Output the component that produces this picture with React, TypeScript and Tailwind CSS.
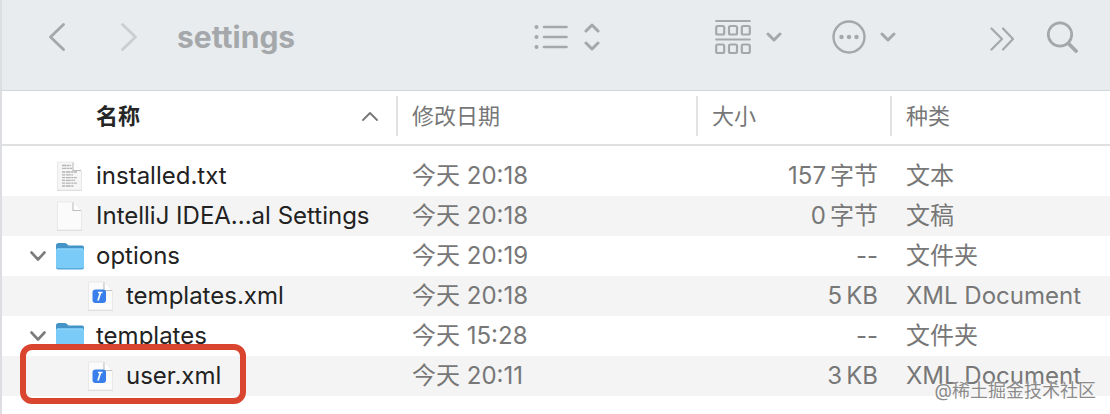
import type { ReactNode } from "react";
import clsx from "clsx";

type Kind = "text" | "blank" | "folder" | "xml";

type Entry = {
  name: string;
  icon: Kind;
  date: string;
  amount: string;
  unit?: string;
  kind: string;
  nested?: boolean;
  marked?: boolean;
};

const entries: Entry[] = [
  { name: "installed.txt", icon: "text", date: "20:18", amount: "157", unit: "字节", kind: "文本" },
  { name: "IntelliJ IDEA...al Settings", icon: "blank", date: "20:18", amount: "0", unit: "字节", kind: "文稿" },
  { name: "options", icon: "folder", date: "20:19", amount: "--", kind: "文件夹" },
  { name: "templates.xml", icon: "xml", date: "20:18", amount: "5", unit: "KB", kind: "XML Document", nested: true },
  { name: "templates", icon: "folder", date: "15:28", amount: "--", kind: "文件夹" },
  { name: "user.xml", icon: "xml", date: "20:11", amount: "3", unit: "KB", kind: "XML Document", nested: true, marked: true },
];

function Stroke({ className, box, d, width = 3 }: { className: string; box: string; d: string; width?: number }) {
  return (
    <svg className={className} viewBox={box} fill="none" stroke="currentColor" strokeWidth={width} strokeLinecap="round" strokeLinejoin="round" aria-hidden="true">
      <path d={d} />
    </svg>
  );
}

function SmallChevron() {
  return <Stroke className="w-4 h-3" box="0 0 16 12" d="M2 3l6 6 6-6" />;
}

function ToolButton({ label, className, children }: { label: string; className?: string; children: ReactNode }) {
  return (
    <button type="button" aria-label={label} className={clsx("flex items-center shrink-0", className)}>
      {children}
    </button>
  );
}

function Toolbar() {
  return (
    <header className="flex items-center h-[91px] pl-[47px] pr-8 pb-4 bg-[#e8ecef] border-b border-[#d3d6d8] text-[#a5a8aa]">
      <ToolButton label="后退">
        <Stroke className="w-4 h-7" box="0 0 16 28" d="M14.5 1.500L1.500 14l13 12.500" width={2.8} />
      </ToolButton>
      <ToolButton label="前进" className="ml-14 text-[#cbced0]">
        <Stroke className="w-4 h-7" box="0 0 16 28" d="M1.500 1.500L14.500 14l-13 12.500" width={2.8} />
      </ToolButton>
      <h1 className="ml-10 text-[30px] leading-8 font-bold">settings</h1>

      <div className="flex items-center ml-auto">
        <ToolButton label="显示方式" className="gap-4">
          <svg className="w-[34px] h-6" viewBox="0 0 34 24" fill="currentColor" aria-hidden="true">
            <circle cx="2.500" cy="2" r="2" />
            <circle cx="2.500" cy="12" r="2" />
            <circle cx="2.500" cy="22" r="2" />
            <path d="M10 2h22.500M10 12h22.500M10 22h22.500" stroke="currentColor" strokeWidth="2.600" strokeLinecap="round" />
          </svg>
          <Stroke className="w-4 h-7" box="0 0 16 28" d="M2 8l6-6 6 6M2 20l6 6 6-6" />
        </ToolButton>
        <ToolButton label="分组" className="ml-[115px] gap-[15px]">
          <svg className="w-9 h-9" viewBox="0 0 36 36" fill="none" stroke="currentColor" strokeWidth="2.200" strokeLinecap="round" aria-hidden="true">
            <path d="M1.200 2h33.600M1.200 20.500h33.600" />
            <rect x="1.200" y="7" width="8" height="8.500" rx="1.500" />
            <rect x="14" y="7" width="8" height="8.500" rx="1.500" />
            <rect x="26.800" y="7" width="8" height="8.500" rx="1.500" />
            <rect x="1.200" y="25.500" width="8" height="8.500" rx="1.500" />
            <rect x="14" y="25.500" width="8" height="8.500" rx="1.500" />
            <rect x="26.800" y="25.500" width="8" height="8.500" rx="1.500" />
          </svg>
          <SmallChevron />
        </ToolButton>
        <ToolButton label="操作" className="ml-[50px] gap-[14px]">
          <svg className="w-[34px] h-[34px]" viewBox="0 0 34 34" aria-hidden="true">
            <circle cx="17" cy="17" r="15.500" fill="none" stroke="currentColor" strokeWidth="2.400" />
            <g fill="currentColor">
              <circle cx="9.500" cy="17" r="2.200" />
              <circle cx="17" cy="17" r="2.200" />
              <circle cx="24.500" cy="17" r="2.200" />
            </g>
          </svg>
          <SmallChevron />
        </ToolButton>
        <ToolButton label="更多" className="ml-[94px] mt-1">
          <Stroke className="w-6 h-6" box="0 0 24 24" d="M1.500 1.500L12 12 1.500 22.500M13 1.500L23 12 13 22.500" width={2.2} />
        </ToolButton>
        <ToolButton label="搜索" className="ml-8">
          <svg className="w-8 h-8" viewBox="0 0 32 32" fill="none" stroke="currentColor" strokeLinecap="round" aria-hidden="true">
            <circle cx="14" cy="13.500" r="11.700" strokeWidth="2.700" />
            <path d="M22.500 22.500l7.500 7.500" strokeWidth="3.800" />
          </svg>
        </ToolButton>
      </div>
    </header>
  );
}

function FileIcon({ icon }: { icon: Kind }) {
  if (icon === "folder") {
    return (
      <svg className="w-[30px] h-[30px]" viewBox="0 0 30 30" aria-hidden="true">
        <path d="M1 4.500Q1 2 3.500 2h6q1.500 0 2.500 1l1.500 1.500H27q2 0 2 2V13H1z" fill="#4594c8" />
        <rect x="1" y="7.500" width="28" height="21" rx="2" fill="#56aadc" />
        <rect x="1" y="7.500" width="28" height="19.500" rx="1.800" fill="#7bcbf9" />
        <path d="M2 8h26" stroke="#93d8fd" />
      </svg>
    );
  }
  return (
    <svg className="w-[30px] h-[30px]" viewBox="0 0 30 30" aria-hidden="true">
      <path d="M2 1h15.500L27 10.500V30H2z" fill="#dadada" />
      <path d="M2.500 1H17.500L26.500 10V29H2.500z" fill={icon === "text" ? "#f6f6f6" : "#fbfbfb"} stroke="#e7e7e7" strokeWidth=".8" />
      <path d="M18 1.500V9.500h8z" fill="#fff" />
      <path d="M18 1.500V9.500h8" fill="none" stroke="#bdbdbd" strokeWidth="1.100" />
      {icon === "text" && (
        <g stroke="#b4b4b4" strokeWidth="1.300">
          <path d="M7 4.500h9M7 7.300h10" strokeDasharray="4 .5 3 .6" />
          <path d="M7 11h15M7 13.800h11M7 16.600h15M7 19.400h13M7 22.200h15M7 25h12" strokeDasharray="3 .7 5 .6 2 .5" />
        </g>
      )}
      {icon === "xml" && (
        <>
          <rect x="6.500" y="8.500" width="13.500" height="13.500" rx="3" fill="#397feb" />
          <path d="M12 11.500h4.500M14.500 11.500l-2.500 8" stroke="#fff" strokeWidth="1.700" fill="none" />
        </>
      )}
    </svg>
  );
}

function Row({ entry }: { entry: Entry }) {
  return (
    <tr className="h-10 even:bg-[#f4f4f4]">
      <td className="relative p-0 text-[#222]">
        <div className={clsx("flex items-center", entry.nested ? "pl-[84px]" : "pl-7")}>
          {!entry.nested && (
            <span className="flex w-[25px] shrink-0">
              {entry.icon === "folder" && (
                <button type="button" aria-label={`折叠 ${entry.name}`} className="text-[#7c7c7c]">
                  <Stroke className="w-4 h-3" box="0 0 16 12" d="M1.500 2.500L8 9.500l6.500-7" width={2.6} />
                </button>
              )}
            </span>
          )}
          <FileIcon icon={entry.icon} />
          <span className={clsx("whitespace-nowrap", entry.nested ? "ml-[10px]" : "ml-[11px]")}>{entry.name}</span>
        </div>
        {entry.marked && (
          <span className="absolute -top-3 -bottom-2 left-[18px] w-[226px] rounded-xl border-[6px] border-[#d9452f]" />
        )}
      </td>
      <td className="p-0 pl-4">今天 {entry.date}</td>
      <td className="p-0 pr-3">
        <div className="flex justify-end gap-1">
          <span>{entry.amount}</span>
          {entry.unit && <span>{entry.unit}</span>}
        </div>
      </td>
      <td className="p-0 pl-4 whitespace-nowrap">{entry.kind}</td>
    </tr>
  );
}

function HeadCell({ children }: { children: ReactNode }) {
  return (
    <th scope="col" className="p-0 pb-1 border-b-2 border-[#dfe0e1] font-normal text-left">
      <div className="flex items-center h-10 border-l-2 border-[#e2e2e2] pl-[14px]">{children}</div>
    </th>
  );
}

export default function App() {
  return (
    <div className="relative min-h-screen bg-white border-l-2 border-[#dcdee1] font-['Inter','Noto_Sans_CJK_SC',sans-serif]">
      <Toolbar />
      <table className="w-full table-fixed border-separate border-spacing-0 text-[24px] leading-8 text-[#777]">
        <colgroup>
          <col className="w-[394px]" />
          <col className="w-[300px]" />
          <col className="w-[194px]" />
          <col />
        </colgroup>
        <thead className="text-[22px]">
          <tr className="h-[55px]">
            <th scope="col" aria-sort="ascending" className="p-0 pb-1 border-b-2 border-[#dfe0e1] text-left text-[#262626]">
              <div className="flex items-center justify-between h-10 pl-[94px] pr-[18px]">
                名称
                <Stroke className="w-4 h-3 text-[#777]" box="0 0 16 12" d="M1 10l7-7 7 7" width={1.8} />
              </div>
            </th>
            <HeadCell>修改日期</HeadCell>
            <HeadCell>大小</HeadCell>
            <HeadCell>种类</HeadCell>
          </tr>
        </thead>
        <tbody className="before:block before:h-[10px]">
          {entries.map((entry) => (
            <Row key={entry.name} entry={entry} />
          ))}
        </tbody>
      </table>
      <p className="absolute right-[14px] top-[379px] text-[18px] leading-6 text-[#8b8b8b] [text-shadow:0_0_2px_#fff]">@稀土掘金技术社区</p>
    </div>
  );
}
